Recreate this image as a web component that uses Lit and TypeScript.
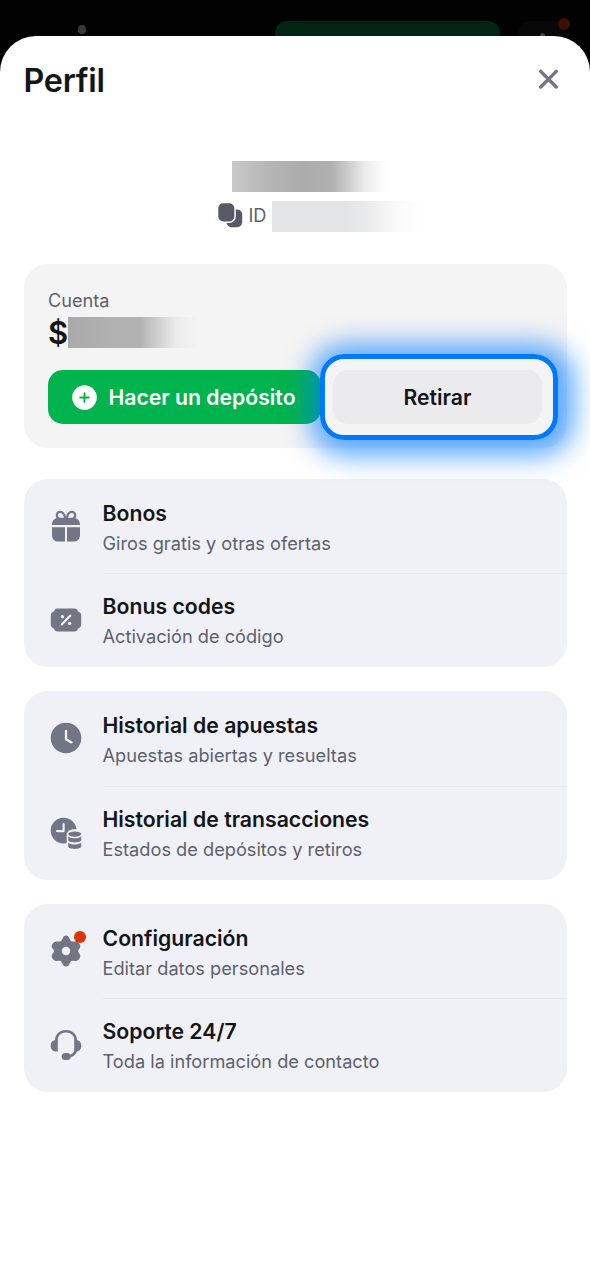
import { LitElement, html, svg, css } from "lit";
import { customElement, property } from "lit/decorators.js";

type IconName = "gift" | "ticket" | "clock" | "transactions" | "gear" | "headset";

interface MenuItem {
  icon: IconName;
  title: string;
  text: string;
  badge?: boolean;
}

const GROUPS: MenuItem[][] = [
  [
    { icon: "gift", title: "Bonos", text: "Giros gratis y otras ofertas" },
    { icon: "ticket", title: "Bonus codes", text: "Activación de código" },
  ],
  [
    { icon: "clock", title: "Historial de apuestas", text: "Apuestas abiertas y resueltas" },
    { icon: "transactions", title: "Historial de transacciones", text: "Estados de depósitos y retiros" },
  ],
  [
    { icon: "gear", title: "Configuración", text: "Editar datos personales", badge: true },
    { icon: "headset", title: "Soporte 24/7", text: "Toda la información de contacto" },
  ],
];

const ICONS = {
  gift: svg`
    <path d="M17.4 10.600C16.500 6.400 14.800 3.900 12.300 3.900c-2.300 0-3.700 1.600-3.500 3.700.1 1.300.8 2.300 2 3M18.600 10.600C19.500 6.400 21.200 3.900 23.700 3.900c2.300 0 3.700 1.600 3.500 3.700-.1 1.300-.8 2.300-2 3" fill="none" stroke="currentColor" stroke-width="2.200"/>
    <path d="M4 17v-.3c0-4 2.800-6.900 6.800-6.900h14.400c4 0 6.800 2.900 6.800 6.900v.3zM4 19.300h13V33.600h-6.200C6.600 33.600 4 31 4 26.900zM19 19.300h13v7.600c0 4.100-2.600 6.700-6.800 6.700H19z"/>`,
  ticket: svg`
    <path d="M9.500 6.600h17c1.900 0 3.100 1.200 3.500 3 1.900.5 3.200 1.800 3.200 3.700v9.400c0 1.900-1.300 3.200-3.200 3.700-.4 1.800-1.600 3-3.500 3h-17c-1.900 0-3.100-1.200-3.500-3-1.900-.5-3.200-1.800-3.200-3.700v-9.400c0-1.900 1.300-3.200 3.200-3.700.4-1.800 1.600-3 3.500-3z"/>
    <path d="M13.900 22.300l8.300-8.600" fill="none" stroke="#f0f1f6" stroke-width="2.300" stroke-linecap="round"/>
    <circle cx="14.400" cy="14.700" r="1.700" fill="#f0f1f6"/><circle cx="21.600" cy="21.400" r="1.700" fill="#f0f1f6"/>`,
  clock: svg`
    <circle cx="18" cy="18" r="15.300"/>
    <path d="M18 10.900v8.300l5.500 3.200" fill="none" stroke="#f0f1f6" stroke-width="2.300" stroke-linecap="round" stroke-linejoin="round"/>`,
  transactions: svg`
    <circle cx="15.600" cy="15.600" r="12.900"/>
    <path d="M15.600 9v7.100H9" fill="none" stroke="#f0f1f6" stroke-width="2.200" stroke-linecap="round" stroke-linejoin="round"/>
    <path d="M18.700 19.400c0-7 15.800-7 15.800 0V36H18.700z" fill="#f0f1f6"/>
    <ellipse cx="26.700" cy="19.100" rx="6.500" ry="2.700"/>
    <path d="M20.200 21.400c2.500 2.400 10.500 2.400 13 0v3.700c0 3.200-13 3.200-13 0zM20.200 27.800c2.500 2.400 10.500 2.400 13 0v3.700c0 3.200-13 3.200-13 0z"/>`,
  gear: svg`
    <path fill-rule="evenodd" d="M14.900 4.700C16.200 1.900 19.800 1.900 21.100 4.700L22.200 7C22.800 8.200 23.800 8.700 25.100 8.600L27.500 8.400C30.700 8.200 33.500 12.500 31.800 15.100L30.400 17C29.900 17.700 29.900 18.500 30.400 19.200L31.800 21.200C33.500 23.800 30.700 28.100 27.500 27.900L25.100 27.700C23.800 27.600 22.800 28.100 22.200 29.300L21.100 31.400C19.800 34.100 16.200 34.100 14.900 31.400L13.800 29.300C13.200 28.100 12.200 27.600 10.900 27.700L8.500 27.900C5.300 28.100 2.500 23.800 4.200 21.200L5.600 19.200C6.100 18.500 6.100 17.700 5.600 17L4.200 15.100C2.500 12.500 5.300 8.200 8.500 8.400L10.900 8.600C12.200 8.700 13.200 8.200 13.800 7zM18 13.800a4.250 4.250 0 1 0 0 8.500 4.250 4.250 0 0 0 0-8.500z"/>`,
  headset: svg`
    <path d="M8.200 15.200v-1.700C8.200 8.200 12.200 4.200 18 4.200s9.800 4 9.800 9.300v1.700M28.500 22c-1.200 5-4.800 7.400-10 7.500" fill="none" stroke="currentColor" stroke-width="2.600"/>
    <path d="M9.800 13.300v11.100H7.500c-3 0-4.800-2.300-4.800-5.600s1.800-5.500 4.800-5.500zM26.200 13.300v11.100h2.300c3 0 4.800-2.300 4.800-5.600s-1.800-5.500-4.800-5.500z"/>
    <rect x="13.700" y="26.100" width="8.900" height="7" rx="3.500"/>`,
};

@customElement("menu-row")
export class MenuRow extends LitElement {
  @property({ attribute: false }) item!: MenuItem;

  static styles = css`
    :host { display: flex; height: 95.200px; padding-left: 24.500px; box-sizing: border-box; gap: 18.500px; }
    :host([last]) { height: 93px; }
    .icon { position: relative; margin-top: 29px; width: 36px; height: 36px; color: #717584; flex: none; }
    :host([last]) .icon { margin-top: 28px; }
    .icon svg { display: block; width: 36px; height: 36px; fill: currentColor; }
    .badge { position: absolute; left: 25.800px; top: -2px; width: 12.200px; height: 12.200px; border-radius: 50%; background: #dd3500; }
    .copy { flex: 1; padding-top: 18.800px; box-sizing: border-box; border-bottom: 1.500px solid #e6e7eb; }
    :host([last]) .copy { padding-top: 16.900px; border-bottom: none; }
    .title { font-size: 21.230px; line-height: 30px; font-weight: 600; color: #141517; }
    .text { font-size: 18.220px; line-height: 30px; color: #5d616c; }
  `;

  render() {
    return html`
      <div class="icon">
        <svg viewBox="0 0 36 36">${ICONS[this.item.icon]}</svg>
        ${this.item.badge ? html`<span class="badge"></span>` : null}
      </div>
      <div class="copy">
        <div class="title">${this.item.title}</div>
        <div class="text">${this.item.text}</div>
      </div>
    `;
  }
}

@customElement("app-root")
export class AppRoot extends LitElement {
  static styles = css`
    :host { display: flex; flex-direction: column; height: 1280px; overflow: hidden; background: #020202; font-family: Inter, "Liberation Sans", sans-serif; }
    .backdrop { display: flex; align-items: flex-start; height: 36.400px; flex: none; overflow: hidden; box-sizing: border-box; padding: 21.300px 23px 0 77.700px; }
    .dot { width: 8.600px; height: 8.600px; margin-top: 4px; border-radius: 50%; background: #383838; flex: none; }
    .pill { width: 224.500px; height: 54px; margin-left: 189px; border-radius: 12px; background: #002510; }
    .tile { position: relative; width: 49px; height: 54px; margin-left: 18px; border-radius: 14px; background: #080808; }
    .tile .peak { position: absolute; left: 22px; top: 12px; width: 5px; height: 5px; border-radius: 50%; background: #444; }
    .tile .alert { position: absolute; left: 40px; top: -3px; width: 12px; height: 12px; border-radius: 50%; background: #3c0f00; }
    .sheet { flex: 1; box-sizing: border-box; padding: 0 23.500px; border-radius: 36px 36px 0 0; background: #fff; }
    .header { display: flex; justify-content: space-between; align-items: center; height: 86px; padding-right: 7px; }
    .heading { margin: 4px 0 0; font-size: 32.300px; letter-spacing: -0.250px; line-height: 40px; font-weight: 600; color: #141517; }
    .close { width: 23px; height: 23px; display: block; }
    .user { display: flex; flex-direction: column; align-items: flex-start; padding-top: 38.600px; }
    .name { width: 155px; height: 31px; margin-left: 208.500px; background: linear-gradient(90deg, #c9c9c9, #b5b5b5 24%, #acacac 45%, #b0b0b0 64%, #cacaca 74%, #ececec 86%, #fff); }
    .id { display: flex; align-items: center; height: 31px; margin: 9px 0 0 194px; color: #5d616c; font-size: 18.150px; }
    .id svg { width: 25px; height: 26px; margin: 0 6px 2px 0; }
    .id .tag { margin-bottom: 2px; }
    .number { width: 150px; height: 31px; margin-left: 6px; background: linear-gradient(90deg, #e3e4e5, #e2e4e5 50%, #ebebec 65%, #f9f9f9 82%, #fff); }
    .account { box-sizing: border-box; height: 184.500px; margin-top: 32px; padding: 22px 24.500px 0; border-radius: 24px; background: #f4f4f4; }
    .label { font-size: 18.150px; line-height: 28px; color: #5d616c; }
    .money { display: flex; height: 31px; margin-top: 3px; align-items: center; }
    .currency { width: 20px; font-size: 31px; line-height: 31px; font-weight: 600; color: #141517; }
    .amount { width: 155px; height: 31px; background: linear-gradient(90deg, #aaa, #b1b1b1 30%, #b1b1b1 46%, #d0d0d0 58%, #ececec 70%, #f4f4f4 85%); }
    .actions { display: flex; gap: 12.300px; margin-top: 22px; }
    .deposit, .withdraw { display: flex; align-items: center; justify-content: center; height: 54.500px; border-radius: 15px; font-size: 21.200px; font-weight: 600; white-space: nowrap; }
    .deposit { width: 272.500px; gap: 11.500px; box-sizing: border-box; padding-right: 1px; color: #fff; background: #00b34c; }
    .deposit svg { width: 25px; height: 25px; }
    .withdraw { position: relative; flex: 1; color: #141517; background: #ebebed; }
    .ring { position: absolute; inset: -16.200px -16px -15.500px -12.800px; border: 5px solid #0078ff; border-radius: 24px; box-shadow: 3px 3px 26px 14px rgba(0, 122, 255, 0.62); }
    .group { margin-top: 24.300px; border-radius: 24px; background: #f0f1f6; }
    .account + .group { margin-top: 30.500px; }
  `;

  render() {
    return html`
      <div class="backdrop">
        <span class="dot"></span>
        <span class="pill"></span>
        <span class="tile"><i class="peak"></i><i class="alert"></i></span>
      </div>
      <main class="sheet">
        <div class="header">
          <h1 class="heading">Perfil</h1>
          <svg class="close" viewBox="0 0 23 23" fill="none" stroke="#717584" stroke-width="3.400" stroke-linecap="round">
            <path d="M3.700 3.400l15.600 15.600M19.300 3.400L3.700 19" />
          </svg>
        </div>
        <div class="user">
          <div class="name"></div>
          <div class="id">
            <svg viewBox="0 0 25 26" fill="#555a64">
              <rect x="8.500" y="7.500" width="15.700" height="17.700" rx="5" />
              <rect x="0.300" y="1.200" width="16" height="18.200" rx="5" stroke="#fff" stroke-width="3" paint-order="stroke" />
            </svg>
            <span class="tag">ID</span>
            <div class="number"></div>
          </div>
        </div>
        <section class="account">
          <div class="label">Cuenta</div>
          <div class="money"><span class="currency">$</span><div class="amount"></div></div>
          <div class="actions">
            <div class="deposit">
              <svg viewBox="0 0 25 25">
                <circle cx="12.500" cy="12.500" r="12.300" fill="#fff" />
                <path d="M12.500 8.200v8.600M8.200 12.500h8.600" stroke="#00b34c" stroke-width="1.900" stroke-linecap="round" />
              </svg>
              <span>Hacer un depósito</span>
            </div>
            <div class="withdraw">Retirar<span class="ring"></span></div>
          </div>
        </section>
        ${GROUPS.map(
          (group) => html`
            <section class="group">
              ${group.map((item, i) => html`<menu-row .item=${item} ?last=${i === group.length - 1}></menu-row>`)}
            </section>
          `
        )}
      </main>
    `;
  }
}
